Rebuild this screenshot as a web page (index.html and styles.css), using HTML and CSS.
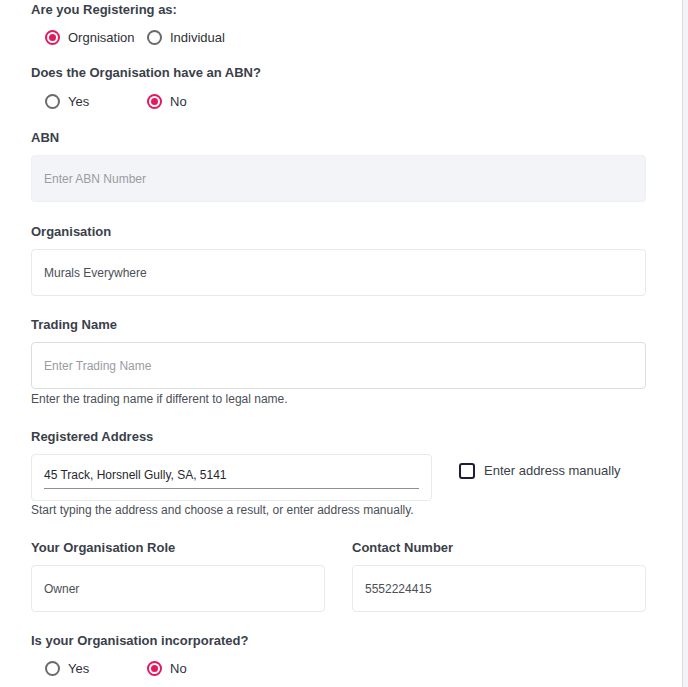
FILE: index.html
```html
<!DOCTYPE html>
<html lang="en">
<head>
<meta charset="utf-8">
<title>Register</title>
<link rel="stylesheet" href="styles.css">
</head>
<body>
<div class="page">
  <form class="form">
    <div class="group q1">
      <div class="label">Are you Registering as:</div>
      <div class="radios">
        <label class="radio"><span class="dot checked"></span><span>Orgnisation</span></label>
        <label class="radio"><span class="dot"></span><span>Individual</span></label>
      </div>
    </div>

    <div class="group q2">
      <div class="label">Does the Organisation have an ABN?</div>
      <div class="radios">
        <label class="radio"><span class="dot"></span><span>Yes</span></label>
        <label class="radio"><span class="dot checked"></span><span>No</span></label>
      </div>
    </div>

    <div class="group f-abn">
      <div class="label">ABN</div>
      <div class="input filled-bg"><span class="placeholder">Enter ABN Number</span></div>
    </div>

    <div class="group f-org">
      <div class="label">Organisation</div>
      <div class="input"><span class="value">Murals Everywhere</span></div>
    </div>

    <div class="group f-trade">
      <div class="label">Trading Name</div>
      <div class="input darker"><span class="placeholder">Enter Trading Name</span></div>
      <div class="help help-trade">Enter the trading name if different to legal name.</div>
    </div>

    <div class="group f-addr">
      <div class="label">Registered Address</div>
      <div class="addr-row">
        <div class="input addr">
          <div class="addr-inner">45 Track, Horsnell Gully, SA, 5141</div>
        </div>
        <label class="check"><span class="box"></span><span>Enter address manually</span></label>
      </div>
      <div class="help">Start typing the address and choose a result, or enter address manually.</div>
    </div>

    <div class="group f-role two-col">
      <div>
        <div class="label">Your Organisation Role</div>
        <div class="input"><span class="value">Owner</span></div>
      </div>
      <div>
        <div class="label">Contact Number</div>
        <div class="input"><span class="value">5552224415</span></div>
      </div>
    </div>

    <div class="group q3">
      <div class="label">Is your Organisation incorporated?</div>
      <div class="radios">
        <label class="radio"><span class="dot"></span><span>Yes</span></label>
        <label class="radio"><span class="dot checked"></span><span>No</span></label>
      </div>
    </div>
  </form>
</div>
</body>
</html>
```

FILE: styles.css
```css
html, body {
  margin: 0;
  padding: 0;
  background: #f3f4f7;
}

body {
  font-family: "Liberation Sans", Arial, sans-serif;
  height: 687px;
  overflow: hidden;
}

.page {
  width: 683px;
  height: 687px;
  box-sizing: border-box;
  background: #ffffff;
  border-right: 1px solid #dcdcdf;
}

.form {
  padding: 1px 0 0 31px;
  width: 615px;
}

.label {
  font-size: 13px;
  line-height: 18px;
  font-weight: 700;
  color: #3b3f4a;
  margin-bottom: 8px;
}

.q1 .label { margin-bottom: 9px; }
.q2 { margin-top: 18px; }
.q2 .label { margin-bottom: 10px; }
.f-abn { margin-top: 19px; }
.f-org { margin-top: 21px; }
.f-trade { margin-top: 20px; }
.f-addr { margin-top: 21px; }
.f-role { margin-top: 21px; }
.q3 { margin-top: 20px; }
.q3 .label { margin-bottom: 9px; }

.radios {
  display: flex;
  padding-left: 14px;
  height: 18px;
}

.radio {
  display: flex;
  align-items: center;
  gap: 8px;
  width: 102px;
  font-size: 13px;
  color: #2f3137;
}

.dot {
  width: 15px;
  height: 15px;
  box-sizing: border-box;
  border: 2px solid #6a6a6e;
  border-radius: 50%;
  display: flex;
  align-items: center;
  justify-content: center;
  flex: none;
}

.dot.checked {
  border-color: #e3195d;
}

.dot.checked::after {
  content: "";
  width: 7px;
  height: 7px;
  border-radius: 50%;
  background: #e3195d;
}

.input {
  height: 47px;
  box-sizing: border-box;
  border: 1px solid #e8e9ec;
  border-radius: 4px;
  padding: 0 12px;
  display: flex;
  align-items: center;
  font-size: 12px;
  background: #fff;
}

.input.filled-bg {
  background: #f3f4f7;
  border-color: #eff0f3;
}

.input.darker {
  border-color: #dcdde0;
}

.placeholder {
  color: #9a9ca3;
}

.value {
  color: #4b4f57;
}

.help {
  margin-top: 1px;
  font-size: 12px;
  line-height: 16px;
  color: #4b4f57;
}

.help.help-trade {
  margin-top: 2px;
}

.addr-row {
  display: grid;
  grid-template-columns: 401px 1fr;
  column-gap: 27px;
  align-items: start;
}

.input.addr {
  display: block;
  padding-top: 12px;
}

.addr-inner {
  font-size: 12px;
  line-height: 16px;
  color: #26282d;
  padding-bottom: 5px;
  border-bottom: 1px solid #8f9095;
}

.check {
  display: flex;
  align-items: center;
  gap: 9px;
  margin-top: 9px;
  font-size: 13px;
  line-height: 16px;
  color: #3b3f4a;
}

.box {
  width: 16px;
  height: 16px;
  box-sizing: border-box;
  border: 2px solid #1f1c3b;
  border-radius: 3px;
  flex: none;
}

.two-col {
  display: grid;
  grid-template-columns: 1fr 1fr;
  column-gap: 27px;
}
```
